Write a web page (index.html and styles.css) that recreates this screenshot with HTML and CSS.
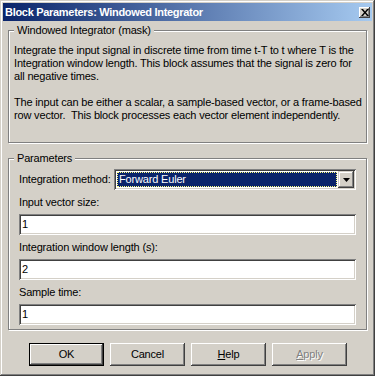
FILE: index.html
```html
<!DOCTYPE html>
<html lang="en">

<head>
    <meta charset="UTF-8">
    <meta name="viewport" content="width=device-width, initial-scale=1.0">
    <title>Block Parameters: Windowed Integrator</title>
    <link rel="stylesheet" href="styles.css">
</head>

<body>
    <div class="window">
        <div class="titlebar">
            <span class="title">Block Parameters: Windowed Integrator</span>
            <span class="close">
                <svg width="8" height="7" viewBox="0 0 8 7">
                    <path d="M0 0h2l2 2.5L6 0h2L5 3.5 8 7H6L4 4.5 2 7H0l3-3.5z" fill="#000" />
                </svg>
            </span>
        </div>

        <div class="body">
            <div class="group group-desc">
                <span class="legend">Windowed Integrator (mask)</span>
                <p class="desc">Integrate the input signal in discrete time from time t-T to t where T is the<br>Integration window length. This block assumes that the signal is zero for<br>all negative times.<br><br>The input can be either a scalar, a sample-based vector, or a frame-based<br>row vector.&nbsp; This block processes each vector element independently.</p>
            </div>

            <div class="group group-params">
                <span class="legend">Parameters</span>
                <div class="method-row">
                    <span class="label">Integration method:</span>
                    <div class="select">
                        <span class="select-value">Forward Euler</span>
                        <span class="select-arrow">
                            <svg width="7" height="4" viewBox="0 0 7 4">
                                <path d="M0 0h7L3.5 4z" fill="#000" />
                            </svg>
                        </span>
                    </div>
                </div>

                <span class="label field-label">Input vector size:</span>
                <div class="textbox">1</div>

                <span class="label field-label">Integration window length (s):</span>
                <div class="textbox">2</div>

                <span class="label field-label">Sample time:</span>
                <div class="textbox">1</div>
            </div>

            <div class="buttons">
                <span class="btn btn-default"><span class="btn-face">OK</span></span>
                <span class="btn"><span class="btn-face">Cancel</span></span>
                <span class="btn"><span class="btn-face"><u>H</u>elp</span></span>
                <span class="btn btn-disabled"><span class="btn-face"><u>A</u>pply</span></span>
            </div>
        </div>
    </div>
</body>

</html>
```

FILE: styles.css
```css
* {
    margin: 0;
    padding: 0;
    box-sizing: border-box;
}

body {
    background-color: #d4d0c8;
    font-family: "Liberation Sans", Arial, sans-serif;
    font-size: 11px;
    line-height: 13px;
    letter-spacing: -0.17px;
    color: #000;
}

.window {
    width: 375px;
    height: 376px;
    padding: 3px;
    background-color: #d4d0c8;
    box-shadow: inset -1px -1px #404040, inset 1px 1px #d4d0c8,
        inset -2px -2px #808080, inset 2px 2px #fff;
}

/* title bar */
.titlebar {
    height: 18px;
    display: flex;
    align-items: center;
    justify-content: space-between;
    padding: 0 2px 0 2px;
    background: linear-gradient(to right, #0a246a, #a6caf0);
}

.title {
    color: #fff;
    font-weight: bold;
    letter-spacing: -0.3px;
    white-space: nowrap;
}

.close {
    width: 11px;
    height: 11px;
    display: flex;
    align-items: center;
    justify-content: center;
    background-color: #d4d0c8;
    box-shadow: inset -1px -1px #404040, inset 1px 1px #fff,
        inset -2px -2px #808080;
}

.body {
    padding: 9px 5px 0;
}

/* group boxes */
.group {
    position: relative;
    border: 1px solid #808080;
    box-shadow: 1px 1px 0 #fff, inset 1px 1px 0 #fff;
}

.legend {
    position: absolute;
    top: -7px;
    left: 5px;
    padding: 0 3px;
    background-color: #d4d0c8;
    white-space: nowrap;
}

.group-desc {
    padding: 13px 5px 20px;
}

.desc {
    white-space: nowrap;
}

.group-params {
    margin-top: 15px;
    padding: 10px 10px 4px;
}

.label {
    display: block;
    white-space: nowrap;
}

.method-row {
    display: flex;
    align-items: center;
    justify-content: space-between;
}

.field-label {
    margin: 6px 0 5px;
}

/* combo box */
.select {
    width: 242px;
    height: 21px;
    display: flex;
    padding: 2px;
    background-color: #fff;
    box-shadow: inset 1px 1px #808080, inset -1px -1px #fff,
        inset 2px 2px #404040, inset -2px -2px #d4d0c8;
}

.select-value {
    flex: 1;
    margin: 1px;
    padding-left: 2px;
    color: #fff;
    line-height: 15px;
    background-color: #0a246a;
    outline: 1px dotted #ffff80;
    outline-offset: -1px;
}

.select-arrow {
    width: 16px;
    display: flex;
    align-items: center;
    justify-content: center;
    background-color: #d4d0c8;
    box-shadow: inset -1px -1px #404040, inset 1px 1px #d4d0c8,
        inset -2px -2px #808080, inset 2px 2px #fff;
}

/* edit boxes */
.textbox {
    height: 21px;
    padding: 2px 3px;
    line-height: 17px;
    background-color: #fff;
    box-shadow: inset 1px 1px #808080, inset -1px -1px #fff,
        inset 2px 2px #404040, inset -2px -2px #d4d0c8;
}

/* push buttons */
.buttons {
    display: flex;
    justify-content: center;
    gap: 6px;
    margin-top: 13px;
    padding-left: 1px;
}

.btn {
    width: 75px;
    height: 23px;
    display: flex;
    box-shadow: inset -1px -1px #404040, inset 1px 1px #fff,
        inset -2px -2px #808080, inset 2px 2px #d4d0c8;
}

.btn-face {
    flex: 1;
    display: flex;
    align-items: center;
    justify-content: center;
}

.btn-default {
    border: 1px solid #000;
    box-shadow: none;
}

.btn-default .btn-face {
    box-shadow: inset -1px -1px #404040, inset 1px 1px #fff,
        inset -2px -2px #808080;
}

.btn-disabled {
    color: #808080;
    text-shadow: 1px 1px 0 #fff;
}
```
